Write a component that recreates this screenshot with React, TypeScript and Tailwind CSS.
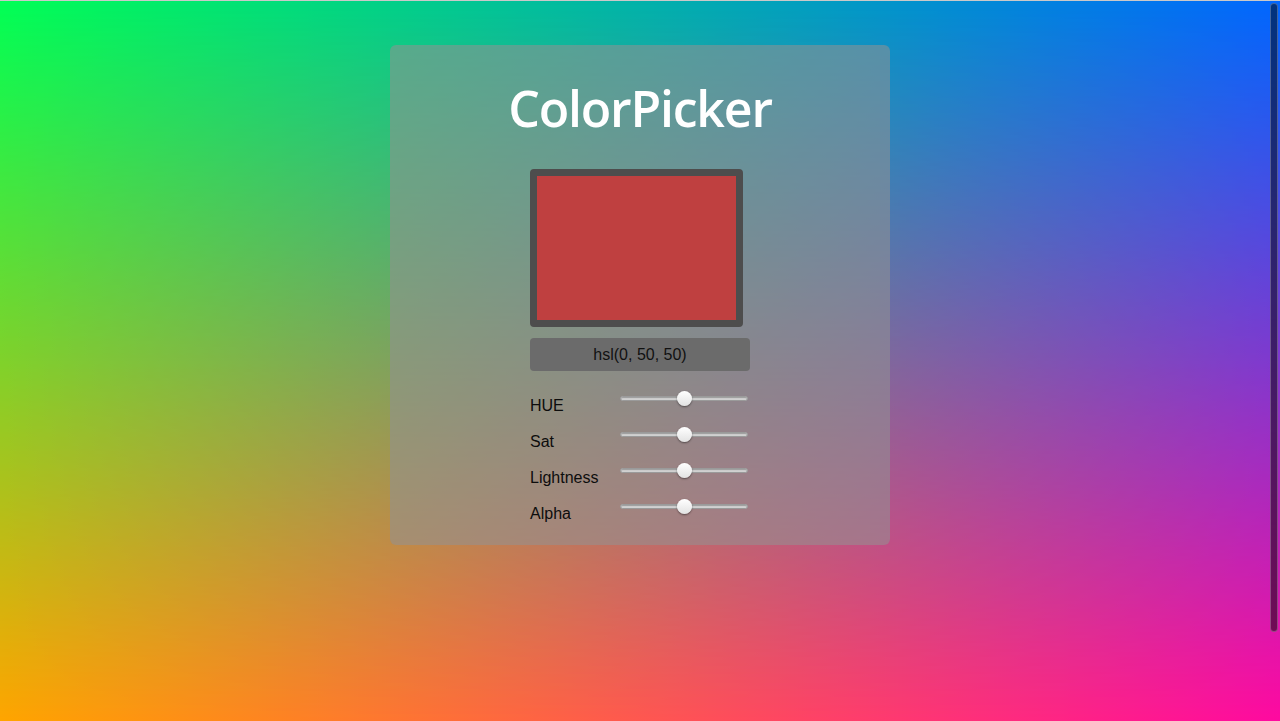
import React, { useState } from 'react';

interface SliderRowProps {
  label: string;
  value: number;
  min: number;
  max: number;
  onChange: (v: number) => void;
}

const SliderRow: React.FC<SliderRowProps> = ({ label, value, min, max, onChange }) => (
  <div className="flex h-[36px] items-start">
    <span className="mt-[7px] w-[90px] text-[16px] leading-[18px] text-[#0d0d0d]">{label}</span>
    <div className="flex h-[16px] items-center">
      <input
        type="range"
        min={min}
        max={max}
        value={value}
        onChange={(e) => onChange(Number(e.target.value))}
        className="h-[5px] w-[128px] cursor-pointer appearance-none rounded-full border border-[#9a9a9a] bg-[#d0d0d0] shadow-[inset_0_1px_1px_rgba(0,0,0,0.25)] outline-none [&::-webkit-slider-thumb]:h-[15px] [&::-webkit-slider-thumb]:w-[15px] [&::-webkit-slider-thumb]:appearance-none [&::-webkit-slider-thumb]:rounded-full [&::-webkit-slider-thumb]:bg-[linear-gradient(#ffffff,#e2e2e2)] [&::-webkit-slider-thumb]:shadow-[0_1px_2px_rgba(0,0,0,0.45)]"
      />
    </div>
  </div>
);

export default function App() {
  const [hue, setHue] = useState(0);
  const [sat, setSat] = useState(50);
  const [light, setLight] = useState(50);
  const [alpha, setAlpha] = useState(50);

  const color = `hsl(${hue < 0 ? hue + 360 : hue}, ${sat}%, ${light}%)`;

  return (
    <div className="relative h-screen w-full overflow-hidden border-t border-[#c9c9c9] bg-[linear-gradient(to_right,#ffa500,#ff0aa0)] font-['Liberation_Sans',Arial,sans-serif] before:absolute before:inset-0 before:bg-[linear-gradient(to_right,#00ff55,#0066ff)] before:[mask-image:linear-gradient(to_bottom,#000,transparent)]">
      <div className="relative mx-auto mt-[44px] h-[500px] w-[500px] rounded-md bg-[rgba(145,145,145,0.55)]">
        <h1 className="pt-[31px] text-center font-['Open_Sans',sans-serif] text-[50px] font-semibold leading-[64px] tracking-[-1.2px] text-white">
          ColorPicker
        </h1>
        <div className="mx-auto mt-[29px] w-[220px]">
          <div className="h-[158px] w-[213px] rounded-[4px] border-[7px] border-[#4d4d4d]">
            <div
              className="h-full w-full"
              style={{ backgroundColor: color, opacity: Math.min(1, alpha / 50) }}
            />
          </div>
          <div className="mt-[11px] flex h-[33px] items-center justify-center rounded-[4px] bg-[#6b6b6b] text-[16px] text-[#111]">
            hsl({hue}, {sat}, {light})
          </div>
          <div className="mt-[19px]">
            <SliderRow label="HUE" value={hue} min={-180} max={180} onChange={setHue} />
            <SliderRow label="Sat" value={sat} min={0} max={100} onChange={setSat} />
            <SliderRow label="Lightness" value={light} min={0} max={100} onChange={setLight} />
            <SliderRow label="Alpha" value={alpha} min={0} max={100} onChange={setAlpha} />
          </div>
        </div>
      </div>
      <div className="absolute right-[2px] top-[2px] h-[629px] w-[8px] rounded-full border border-[rgba(255,255,255,0.25)] bg-[rgba(0,0,0,0.5)]" />
    </div>
  );
}
